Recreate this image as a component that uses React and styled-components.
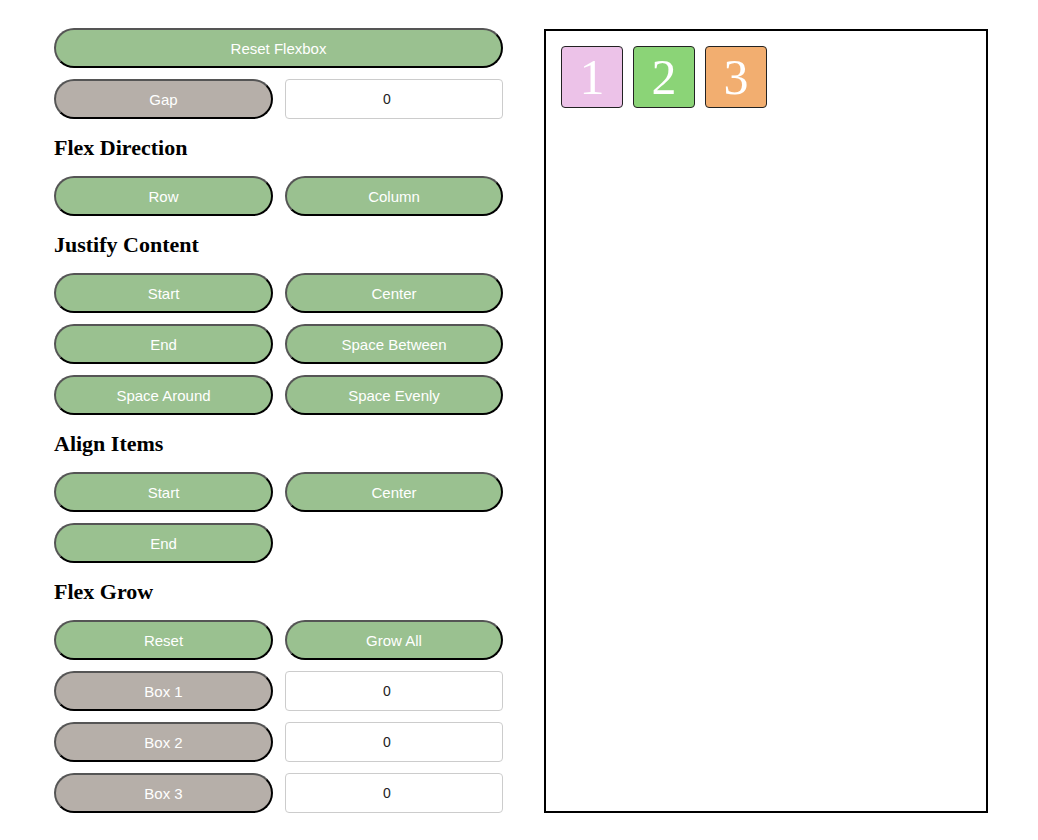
import React, { useState } from 'react';
import styled, { createGlobalStyle } from 'styled-components';

const GlobalStyle = createGlobalStyle`
  body {
    margin: 0;
    background: #fff;
    font-family: "Liberation Serif", "Times New Roman", serif;
  }
`;

const Page = styled.div`
  display: flex;
  align-items: stretch;
  gap: 41px;
  padding: 28px 0 0 54px;
`;

const Controls = styled.div`
  width: 449px;
  display: flex;
  flex-direction: column;
`;

const Grid = styled.div`
  display: grid;
  grid-template-columns: 219px 218px;
  column-gap: 12px;
  row-gap: 11px;
`;

const Heading = styled.h3`
  margin: 18px 0 17px;
  font-size: 22px;
  line-height: 22px;
  font-weight: bold;
  color: #000;
`;

const Button = styled.button`
  height: 40px;
  border-radius: 20px;
  border: 2px solid;
  border-color: #555 #000 #000 #555;
  background: ${(p) => (p.$label ? '#b6afa9' : '#9ac190')};
  color: #fff;
  font-family: "Liberation Sans", Arial, sans-serif;
  font-size: 15px;
  grid-column: ${(p) => (p.$wide ? '1 / span 2' : 'auto')};
  cursor: pointer;
  padding: 0;
`;

const NumberInput = styled.input`
  height: 40px;
  box-sizing: border-box;
  border: 1px solid #ccc;
  border-radius: 4px;
  padding: 0 16px 0 2px;
  text-align: center;
  font-family: "Liberation Sans", Arial, sans-serif;
  font-size: 14px;
  color: #222;
  outline: none;
  &::-webkit-inner-spin-button,
  &::-webkit-outer-spin-button {
    -webkit-appearance: none;
    margin: 0;
  }
`;

const Stage = styled.div`
  width: 444px;
  margin-top: 1px;
  border: 2px solid #000;
  padding: 15px;
  box-sizing: border-box;
  display: flex;
  align-items: flex-start;
  gap: 10px;
`;

const Box = styled.div`
  width: 62px;
  height: 62px;
  box-sizing: border-box;
  border: 1px solid #222;
  border-radius: 4px;
  background: ${(p) => p.$color};
  color: #fff;
  font-family: "Liberation Serif", "Times New Roman", serif;
  font-size: 50px;
  display: flex;
  align-items: center;
  justify-content: center;
`;

const boxes = [
  { n: 1, color: '#ecc2e8' },
  { n: 2, color: '#8bd477' },
  { n: 3, color: '#f2ae70' },
];

const App = () => {
  const [gap, setGap] = useState(0);
  const [grow, setGrow] = useState([0, 0, 0]);

  return (
    <>
      <GlobalStyle />
      <Page>
        <Controls>
          <Grid>
            <Button $wide>Reset Flexbox</Button>
            <Button $label>Gap</Button>
            <NumberInput type="number" value={gap} onChange={(e) => setGap(e.target.value)} />
          </Grid>

          <Heading>Flex Direction</Heading>
          <Grid>
            <Button>Row</Button>
            <Button>Column</Button>
          </Grid>

          <Heading>Justify Content</Heading>
          <Grid>
            <Button>Start</Button>
            <Button>Center</Button>
            <Button>End</Button>
            <Button>Space Between</Button>
            <Button>Space Around</Button>
            <Button>Space Evenly</Button>
          </Grid>

          <Heading>Align Items</Heading>
          <Grid>
            <Button>Start</Button>
            <Button>Center</Button>
            <Button>End</Button>
          </Grid>

          <Heading>Flex Grow</Heading>
          <Grid>
            <Button>Reset</Button>
            <Button>Grow All</Button>
            {grow.map((g, i) => (
              <React.Fragment key={i}>
                <Button $label>Box {i + 1}</Button>
                <NumberInput
                  type="number"
                  value={g}
                  onChange={(e) => {
                    const next = [...grow];
                    next[i] = e.target.value;
                    setGrow(next);
                  }}
                />
              </React.Fragment>
            ))}
          </Grid>
        </Controls>

        <Stage>
          {boxes.map((b) => (
            <Box key={b.n} $color={b.color}>
              {b.n}
            </Box>
          ))}
        </Stage>
      </Page>
    </>
  );
};

export default App;
